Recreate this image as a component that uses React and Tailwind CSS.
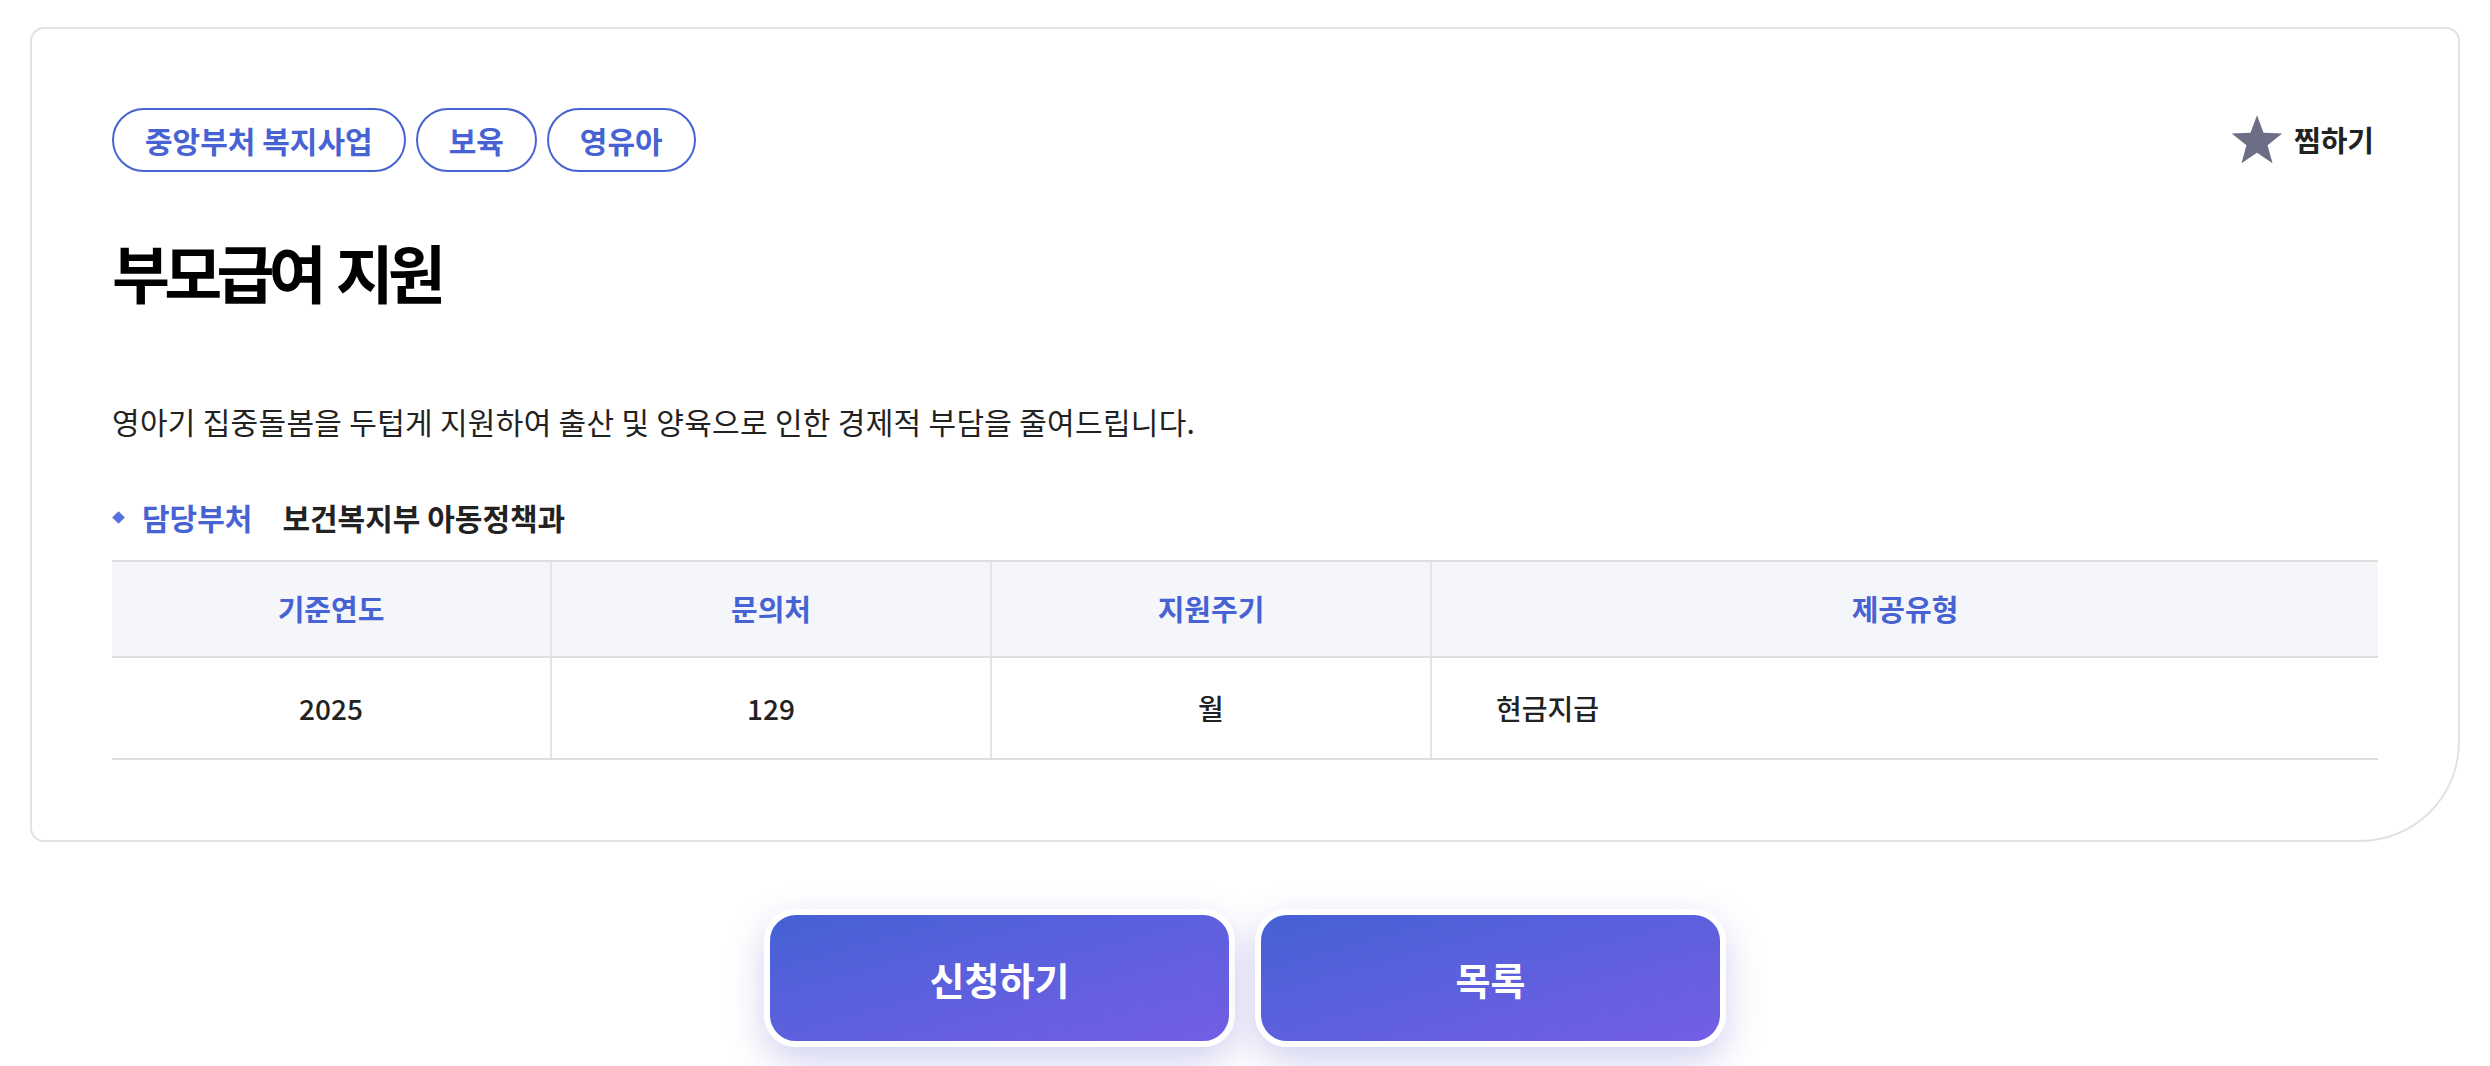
import React from 'react';

const FONT = { fontFamily: '"Noto Sans CJK KR", "Noto Sans", sans-serif' };

const TAGS = ['중앙부처 복지사업', '보육', '영유아'];

const COLUMNS = [
  { label: '기준연도', value: '2025' },
  { label: '문의처', value: '129' },
  { label: '지원주기', value: '월' },
  { label: '제공유형', value: '현금지급', left: true },
];

const StarIcon = () => (
  <svg width="54" height="52" viewBox="0 0 24 23" className="shrink-0">
    <polygon
      points="12,0.5 14.9,8.3 23.2,8.6 16.7,13.8 18.9,21.8 12,17.2 5.1,21.8 7.3,13.8 0.8,8.6 9.1,8.3"
      fill="#6c6e85"
    />
  </svg>
);

const Tag = ({ children }) => (
  <span className="inline-flex items-center h-[64px] px-[31px] rounded-full border-2 border-[#4763d3] text-[#4763d3] text-[30px] font-semibold">
    {children}
  </span>
);

const InfoTable = () => (
  <div className="grid grid-cols-[438px_440px_440px_1fr] border-t-2 border-b-2 border-[#dedede]">
    {COLUMNS.map((col, i) => (
      <div
        key={col.label}
        className={`h-[96px] flex items-center justify-center bg-[#f5f6fa] border-b-2 border-[#dedede] text-[29px] font-semibold text-[#4763d3] ${i > 0 ? 'border-l-2 border-l-[#e4e4e4]' : ''}`}
      >
        {col.label}
      </div>
    ))}
    {COLUMNS.map((col, i) => (
      <div
        key={col.value}
        className={`h-[100px] flex items-center text-[28px] font-medium text-[#222] ${col.left ? 'justify-start pl-[64px]' : 'justify-center'} ${i > 0 ? 'border-l-2 border-l-[#e4e4e4]' : ''}`}
      >
        {col.value}
      </div>
    ))}
  </div>
);

const ActionButton = ({ children }) => (
  <button className="w-[471px] h-[138px] rounded-[32px] border-[6px] border-white bg-gradient-to-br from-[#4461d4] to-[#735ee6] text-white text-[38px] font-bold shadow-[0_14px_36px_rgba(90,90,200,0.28)]">
    {children}
  </button>
);

export default function App() {
  return (
    <div className="w-[2490px] h-[1066px] bg-white overflow-hidden pt-[27px] px-[30px]" style={FONT}>
      <div className="border-2 border-[#e2e2e2] rounded-[14px] rounded-br-[100px] px-[80px] pt-[79px] pb-[80px]">
        <div className="flex items-center justify-between h-[64px]">
          <div className="flex items-center gap-[10px]">
            {TAGS.map(t => <Tag key={t}>{t}</Tag>)}
          </div>
          <button className="flex items-center gap-[10px] text-[29px] font-bold text-[#222] mr-[4px]">
            <StarIcon />
            찜하기
          </button>
        </div>

        <h1 className="mt-[62px] text-[63px] leading-[74px] font-bold text-black tracking-[-0.09em] [word-spacing:6px]">
          부모급여 지원
        </h1>

        <p className="mt-[92px] text-[30px] leading-[42px] text-[#222] tracking-[0.01em]">
          영아기 집중돌봄을 두텁게 지원하여 출산 및 양육으로 인한 경제적 부담을 줄여드립니다.
        </p>

        <div className="mt-[54px] flex items-center h-[42px] text-[30px] font-semibold">
          <span className="w-[9px] h-[9px] rotate-45 bg-[#5570e0] ml-[2px] mr-[19px]" />
          <span className="text-[#4763d3]">담당부처</span>
          <span className="ml-[30px] text-[#222]">보건복지부 아동정책과</span>
        </div>

        <div className="mt-[22px]">
          <InfoTable />
        </div>
      </div>

      <div className="mt-[67px] flex justify-center gap-[20px]">
        <ActionButton>신청하기</ActionButton>
        <ActionButton>목록</ActionButton>
      </div>
    </div>
  );
}
